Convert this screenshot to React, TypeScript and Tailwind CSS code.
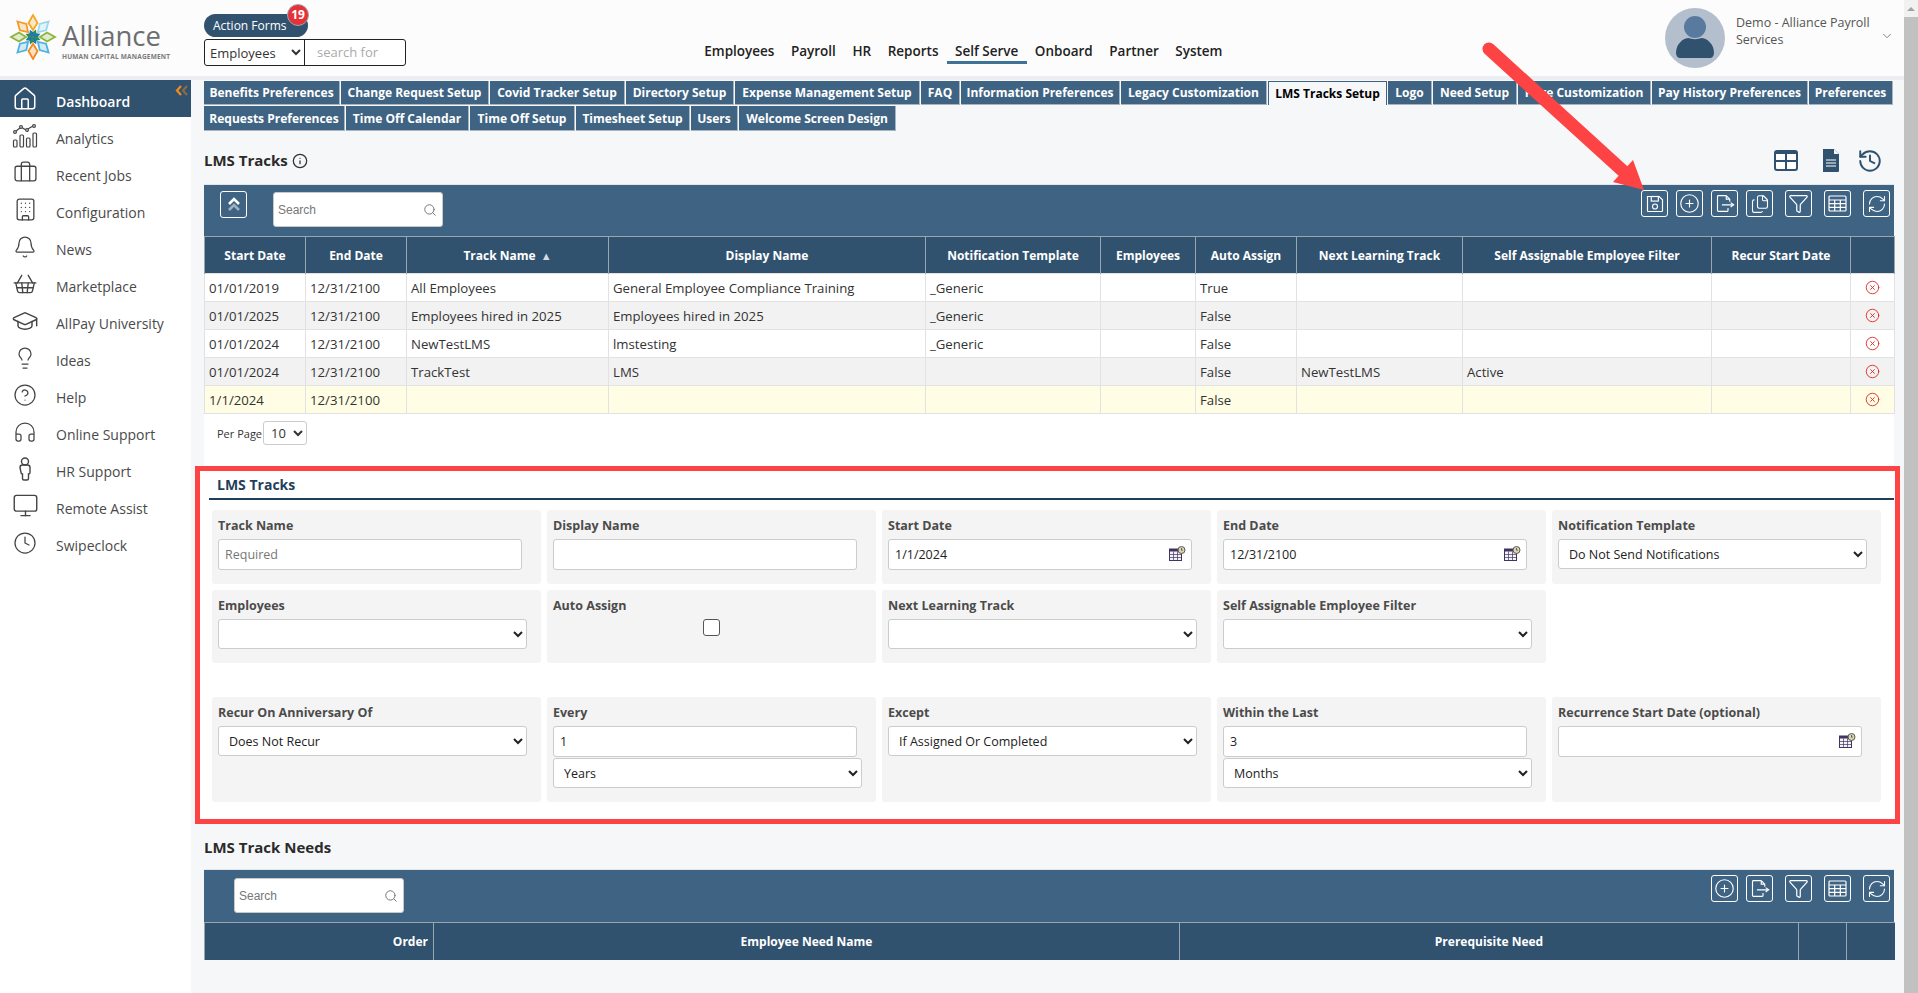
import React from 'react';
import {
  House, Briefcase, Building, Bell, ShoppingBasket, GraduationCap, Lightbulb, CircleHelp,
  Headphones, Monitor, Clock, CirclePlus, Files, Funnel, RefreshCw, History,
  ChevronDown, Search, CircleX, Info,
} from 'lucide-react';

const AnalyticsIcon = () => (
  <svg width="26" height="24" viewBox="0 0 26 24" fill="none" stroke="#444" strokeWidth="1.2">
    <path d="M3 8l6-5 5 3 7-4" />
    <circle cx="3" cy="8" r="1.4" fill="#fff" /><circle cx="9" cy="3" r="1.4" fill="#fff" />
    <circle cx="15" cy="6" r="1.4" fill="#fff" /><circle cx="22" cy="2" r="1.4" fill="#fff" />
    <rect x="1.5" y="16" width="3.5" height="7" rx="1" /><rect x="8" y="11" width="3.5" height="12" rx="1" />
    <rect x="14.5" y="14" width="3.5" height="9" rx="1" /><rect x="21" y="9" width="3.5" height="14" rx="1" />
  </svg>
);

const PersonIcon = () => (
  <svg width="16" height="24" viewBox="0 0 16 24" fill="none" stroke="#444" strokeWidth="1.4">
    <circle cx="8" cy="4.5" r="3.5" />
    <path d="M3 10.5c0-1.5 1-2.5 2.5-2.5h5c1.500 0 2.500 1 2.500 2.500v5c0 1-.8 1.500-1.500 1.500v4.500c0 1-.8 1.500-1.500 1.500h-3c-.8 0-1.500-.5-1.500-1.500V17c-.8 0-1.500-.5-1.500-1.500z" />
  </svg>
);

const sideItems: { label: string; icon: React.ReactNode }[] = [
  { label: 'Analytics', icon: <AnalyticsIcon /> },
  { label: 'Recent Jobs', icon: <Briefcase size={25} strokeWidth={1.25} color="#444" /> },
  { label: 'Configuration', icon: <Building size={25} strokeWidth={1.25} color="#444" /> },
  { label: 'News', icon: <Bell size={24} strokeWidth={1.25} color="#444" /> },
  { label: 'Marketplace', icon: <ShoppingBasket size={26} strokeWidth={1.25} color="#444" /> },
  { label: 'AllPay University', icon: <GraduationCap size={28} strokeWidth={1.25} color="#444" /> },
  { label: 'Ideas', icon: <Lightbulb size={24} strokeWidth={1.25} color="#444" /> },
  { label: 'Help', icon: <CircleHelp size={24} strokeWidth={1.25} color="#444" /> },
  { label: 'Online Support', icon: <Headphones size={24} strokeWidth={1.25} color="#444" /> },
  { label: 'HR Support', icon: <PersonIcon /> },
  { label: 'Remote Assist', icon: <Monitor size={27} strokeWidth={1.25} color="#444" /> },
  { label: 'Swipeclock', icon: <Clock size={24} strokeWidth={1.25} color="#444" /> },
];

const tabsTop = [
  { label: 'Benefits Preferences', w: 'w-[136px]' },
  { label: 'Change Request Setup', w: 'w-[148px]' },
  { label: 'Covid Tracker Setup', w: 'w-[135px]' },
  { label: 'Directory Setup', w: 'w-[108px]' },
  { label: 'Expense Management Setup', w: 'w-[185px]' },
  { label: 'FAQ', w: 'w-[39px]' },
  { label: 'Information Preferences', w: 'w-[159px]' },
  { label: 'Legacy Customization', w: 'w-[146px]' },
  { label: 'LMS Tracks Setup', w: 'w-[119px]', active: true },
  { label: 'Logo', w: 'w-[44px]' },
  { label: 'Need Setup', w: 'w-[84px]' },
  { label: 'Page Customization', w: 'w-[133px]' },
  { label: 'Pay History Preferences', w: 'w-[156px]' },
  { label: 'Preferences', w: 'w-[84px]' },
];

const tabsBottom = [
  { label: 'Requests Preferences', w: 'w-[141px]' },
  { label: 'Time Off Calendar', w: 'w-[123px]' },
  { label: 'Time Off Setup', w: 'w-[105px]' },
  { label: 'Timesheet Setup', w: 'w-[114px]' },
  { label: 'Users', w: 'w-[47px]' },
  { label: 'Welcome Screen Design', w: 'w-[157px]' },
];

const trackCols = [
  { label: 'Start Date', w: 'w-[101px]' },
  { label: 'End Date', w: 'w-[101px]' },
  { label: 'Track Name', w: 'w-[202px]', sort: true },
  { label: 'Display Name', w: 'w-[317px]' },
  { label: 'Notification Template', w: 'w-[175px]' },
  { label: 'Employees', w: 'w-[95px]' },
  { label: 'Auto Assign', w: 'w-[101px]' },
  { label: 'Next Learning Track', w: 'w-[166px]' },
  { label: 'Self Assignable Employee Filter', w: 'w-[249px]' },
  { label: 'Recur Start Date', w: 'w-[139px]' },
  { label: '', w: 'w-[44px]' },
];

const trackRows = [
  ['01/01/2019', '12/31/2100', 'All Employees', 'General Employee Compliance Training', '_Generic', '', 'True', '', '', ''],
  ['01/01/2025', '12/31/2100', 'Employees hired in 2025', 'Employees hired in 2025', '_Generic', '', 'False', '', '', ''],
  ['01/01/2024', '12/31/2100', 'NewTestLMS', 'lmstesting', '_Generic', '', 'False', '', '', ''],
  ['01/01/2024', '12/31/2100', 'TrackTest', 'LMS', '', '', 'False', 'NewTestLMS', 'Active', ''],
  ['1/1/2024', '12/31/2100', '', '', '', '', 'False', '', '', ''],
];

const rowBg = ['bg-white', 'bg-[#f2f2f2]', 'bg-white', 'bg-[#f2f2f2]', 'bg-[#fffde3]'];

const IconBtn: React.FC<{ children: React.ReactNode; className?: string }> = ({ children, className }) => (
  <button className={`w-[27px] h-[27px] flex items-center justify-center border border-white rounded-[3px] text-white ${className || ''}`}>
    {children}
  </button>
);

const SaveIcon = () => (
  <svg width="20" height="20" viewBox="0 0 24 24" fill="none" stroke="#fff" strokeWidth="1.4">
    <path d="M3 3h14l4 4v13a1 1 0 0 1-1 1H4a1 1 0 0 1-1-1z" />
    <rect x="7.500" y="3" width="8.500" height="5.500" />
    <circle cx="12" cy="15" r="3" />
  </svg>
);

const ExportIcon = () => (
  <svg width="21" height="21" viewBox="0 0 24 24" fill="none" stroke="#fff" strokeWidth="1.3">
    <path d="M14 3H5a1 1 0 0 0-1 1v16a1 1 0 0 0 1 1h10a1 1 0 0 0 1-1v-3M14 3l4 4v3M14 3v4h4" />
    <path d="M9 13.500h12M19 11l3.500 2.500-3.500 2.500" />
  </svg>
);

const GridIcon = () => (
  <svg width="19" height="17" viewBox="0 0 19 17" fill="none" stroke="#fff" strokeWidth="1.2">
    <rect x="1" y="1" width="17" height="15" rx="1" />
    <path d="M1 5h17M1 8.700h17M1 12.300h17M6.700 5v11M12.300 5v11" />
  </svg>
);

const SearchBox: React.FC<{ className?: string }> = ({ className }) => (
  <div className={`w-[170px] h-[35px] bg-white rounded-[3px] border border-[#c8c8c8] flex items-center pl-[4px] pr-[5px] ${className || ''}`}>
    <input placeholder="Search" className="min-w-0 flex-1 text-[12px] outline-none placeholder:text-[#777] font-['Liberation_Sans',sans-serif]" />
    <Search size={14} strokeWidth={1.7} color="#777" />
  </div>
);

const CalendarIcon = () => (
  <svg width="17" height="15" viewBox="0 0 17 15" className="shrink-0 -mt-[3px]">
    <rect x="0.500" y="3" width="12" height="11.500" fill="#f4f2f7" stroke="#3f3560" />
    <rect x="0.500" y="3" width="12" height="2.500" fill="#3f3560" />
    <path d="M4.500 5.500v9M8.500 5.500v9M0.500 8.500h12M0.500 11.500h12" stroke="#3f3560" strokeWidth="0.7" />
    <circle cx="12.500" cy="4" r="3.500" fill="#d9d3b8" stroke="#5b5b4a" />
    <path d="M12.500 2v2.200h1.300" stroke="#333" strokeWidth="0.7" fill="none" />
  </svg>
);

const Field: React.FC<{ label: string; children?: React.ReactNode; h?: string }> = ({ label, children, h }) => (
  <div className={`${h || ''} bg-[#f4f4f4] rounded-[3px] pl-[6px] pt-[7px]`}>
    <div className="text-[12.500px] font-bold text-[#4b4b4b] leading-[17px] mb-[5px]">{label}</div>
    {children}
  </div>
);

const TextBox: React.FC<{ value?: string; placeholder?: string; date?: boolean }> = ({ value, placeholder, date }) => (
  <div className="w-[304px] h-[31px] bg-white border border-[#ccc] rounded-[3px] flex items-center pl-[6px] pr-[5px]">
    <input defaultValue={value} placeholder={placeholder} className="min-w-0 flex-1 pt-[1px] text-[12.500px] text-[#222] outline-none placeholder:text-[#777]" />
    {date && <CalendarIcon />}
  </div>
);

const Dropdown: React.FC<{ value?: string; className?: string }> = ({ value, className }) => (
  <select defaultValue={value} className={`block w-[309px] h-[30px] bg-white border border-[#ccc] rounded-[3px] pl-[6px] text-[12.500px] text-[#222] ${className || ''}`}>
    <option>{value}</option>
  </select>
);

const Logo = () => {
  const colors = ['#f5a623', '#9ad7ea', '#8db43c', '#4fb3e0', '#f28a1e', '#4fb3e0', '#8db43c', '#f39a2a'];
  const inner = ['#2f8f4e', '#1f75b5'];
  return (
    <svg width="48" height="46" viewBox="-24 -23 48 46" className="shrink-0">
      {colors.map((c, i) => (
        <path key={i} d="M0-7L4.500-14L0-22L-4.500-14Z" fill={c} fillOpacity="0.25" stroke={c} strokeWidth="1.800" transform={`rotate(${i * 45})`} />
      ))}
      {colors.map((_, i) => (
        <path key={i} d="M0 0L2.500-3.500L0-8L-2.500-3.500Z" fill={inner[i % 2]} transform={`rotate(${i * 45 + 22})`} />
      ))}
    </svg>
  );
};

const App: React.FC = () => {
  return (
    <div className="relative flex w-full h-screen overflow-hidden bg-[#f6f7f9] font-['Open_Sans',sans-serif] text-[#333]">
      <div className="w-[1904px] shrink-0 flex flex-col">
        {/* header */}
        <div className="h-[76px] bg-[#fcfcfc] flex items-start shrink-0">
          <div className="w-[204px] pl-[9px] pt-[14px] flex">
            <Logo />
            <div className="ml-[5px]">
              <div className="text-[27.500px] leading-[32px] text-[#6d6e71] mt-[6px]">Alliance</div>
              <div className="text-[6.500px] font-bold leading-[10px] text-[#7b7b7b] tracking-[0.2px] whitespace-nowrap">HUMAN CAPITAL MANAGEMENT</div>
            </div>
          </div>
          <div className="pt-[14px] w-[202px]">
            <div className="relative w-[104px] h-[23px] rounded-full bg-[#31526f] text-white text-[12px] flex items-center pl-[9px]">
              Action Forms
              <span className="absolute -top-[10px] -right-[1px] w-[22px] h-[22px] rounded-full bg-[#e53238] border border-[#9aa5ae] text-white text-[12px] font-bold flex items-center justify-center">19</span>
            </div>
            <div className="mt-[2px] flex h-[27px] border border-[#222] rounded-[3px] bg-white">
              <select defaultValue="Employees" className="w-[100px] border-r border-[#222] text-[13px] pl-[1px] text-[#333]">
                <option>Employees</option>
              </select>
              <input placeholder="search for" className="min-w-0 flex-1 pl-[12px] text-[13px] outline-none placeholder:text-[#aaa]" />
            </div>
          </div>
          <div className="ml-[290px] mt-[41px] flex text-[13.500px] font-semibold text-[#222]">
            {['Employees', 'Payroll', 'HR', 'Reports', 'Self Serve', 'Onboard', 'Partner', 'System'].map(n => (
              <div key={n} className={`px-[8.250px] h-[23px] leading-[20px] border-b-[3px] ${n === 'Self Serve' ? 'border-[#3f7396]' : 'border-transparent'}`}>{n}</div>
            ))}
          </div>
          <div className="ml-auto pr-[10px] pt-[8px] flex">
            <svg width="60" height="60" viewBox="0 0 60 60" className="shrink-0">
              <circle cx="30" cy="30" r="30" fill="#b4bfcd" />
              <circle cx="30" cy="19" r="11" fill="#587a9f" />
              <path d="M11 45c0-9 7-15 13-15 2 1.500 10 1.500 12 0 6 0 13 6 13 15 0 3-2 5-4 5H15c-2 0-4-2-4-5z" fill="#31526f" />
            </svg>
            <div className="ml-[11px] w-[144px] text-[12.500px] leading-[17px] text-[#555] pt-[6px]">Demo - Alliance Payroll Services</div>
            <ChevronDown size={14} strokeWidth={1.2} color="#555" className="mt-[21px]" />
          </div>
        </div>
        <div className="h-[4px] bg-[#eceef1] shrink-0" />

        <div className="flex flex-1 min-h-0">
          {/* sidebar */}
          <div className="w-[191px] bg-white shrink-0">
            <div className="relative h-[37px] bg-[#31526f] flex items-center text-white font-semibold text-[14px]">
              <div className="w-[56px] flex justify-center pr-[6px]"><House size={26} strokeWidth={1.4} color="#fff" /></div>
              <span className="pt-[6px]">Dashboard</span>
              <svg width="13" height="11" viewBox="0 0 13 11" fill="none" strokeWidth="2.200" className="absolute top-[5px] right-[3px]">
                <path d="M6 1L2 5.500L6 10" stroke="#f08a1c" />
                <path d="M12 1L8 5.500L12 10" stroke="#8a6a4a" />
              </svg>
            </div>
            {sideItems.map(item => (
              <div key={item.label} className="h-[37px] flex items-center text-[14px] text-[#4a4a4a]">
                <div className="w-[56px] flex justify-center pr-[6px]">{item.icon}</div>
                <span className="pt-[6px]">{item.label}</span>
              </div>
            ))}
          </div>

          {/* main */}
          <div className="flex-1 min-w-0 pl-[13px] pr-[10px] pt-[1px]">
            <div className="flex gap-[1px] text-[12px] font-bold text-white whitespace-nowrap">
              {tabsTop.map(t => (
                <div key={t.label} className={`${t.w} h-[24px] pt-[1px] flex items-center justify-center shrink-0 ${t.active ? 'bg-[#f6f7f9] text-black border-t border-x border-[#3f6483]' : 'bg-[#3f6483] border-b border-r border-[#a9b4bf]'}`}>{t.label}</div>
              ))}
            </div>
            <div className="mt-[1px] flex gap-[1px] text-[12px] font-bold text-white whitespace-nowrap">
              {tabsBottom.map(t => (
                <div key={t.label} className={`${t.w} h-[25px] pt-[1px] flex items-center justify-center shrink-0 bg-[#3f6483] border-b border-r border-[#a9b4bf]`}>{t.label}</div>
              ))}
            </div>

            <div className="mt-[18px] h-[23px] flex items-center">
              <span className="text-[15px] font-bold text-[#2b2b2b]">LMS Tracks</span>
              <Info size={16} strokeWidth={1.900} color="#333" className="ml-[4px]" />
              <div className="ml-auto flex items-center">
                <svg width="24" height="21" viewBox="0 0 24 21" fill="none">
                  <rect x="1" y="1" width="22" height="19" rx="2" fill="#fff" stroke="#31526f" strokeWidth="2" />
                  <rect x="1" y="1" width="22" height="3" fill="#31526f" />
                  <path d="M12 2v17M2 11h20" stroke="#31526f" strokeWidth="2" />
                </svg>
                <svg width="18" height="23" viewBox="0 0 18 23" className="ml-[24px]">
                  <path d="M1 0h11l5 5v17a1 1 0 0 1-1 1H1z" fill="#31526f" />
                  <path d="M12 0v5h5z" fill="#f6f7f9" />
                  <path d="M4 11h10M4 14h10M4 17h10" stroke="#fff" strokeWidth="1" />
                </svg>
                <History size={26} strokeWidth={1.800} color="#31526f" className="ml-[17px] mr-[11px]" />
              </div>
            </div>

            {/* tracks grid */}
            <div className="mt-[12px] h-[52px] bg-[#3f6483] flex items-start pt-[5px] pl-[16px] pr-[4px] border-t border-[#e2e6ea]">
              <IconBtn className="mt-[1px]">
                <svg width="14" height="16" viewBox="0 0 14 16" fill="none" strokeWidth="2.600">
                  <path d="M2 7l5-5 5 5" stroke="#fff" />
                  <path d="M2 13l5-5 5 5" stroke="#9fb1c1" />
                </svg>
              </IconBtn>
              <SearchBox className="ml-[26px] mt-[2px]" />
              <div className="ml-auto flex">
                <IconBtn className="mr-[8px]"><SaveIcon /></IconBtn>
                <IconBtn className="mr-[8px]"><CirclePlus size={21} strokeWidth={1.300} /></IconBtn>
                <IconBtn className="mr-[8px]"><ExportIcon /></IconBtn>
                <IconBtn className="mr-[12px]"><Files size={20} strokeWidth={1.300} /></IconBtn>
                <IconBtn className="mr-[12px]"><Funnel size={21} strokeWidth={1.400} /></IconBtn>
                <IconBtn className="mr-[12px]"><GridIcon /></IconBtn>
                <IconBtn><RefreshCw size={20} strokeWidth={1.300} /></IconBtn>
              </div>
            </div>
            <table className="table-fixed w-[1690px] border-collapse">
              <thead>
                <tr className="h-[37px] bg-[#31526f] text-white text-[12px] font-bold">
                  {trackCols.map((c, i) => (
                    <th key={i} className={`${c.w} pt-[2px] border border-[#9aa5ae] border-b-0 font-bold`}>
                      {c.label}{c.sort && <span className="ml-[5px] text-[11px] text-[#d5dbe1]">▲</span>}
                    </th>
                  ))}
                </tr>
              </thead>
              <tbody>
                {trackRows.map((r, i) => (
                  <tr key={i} className={`h-[28px] ${rowBg[i]} text-[13.200px] text-[#333]`}>
                    {r.map((c, j) => (
                      <td key={j} className="border border-[#e2e2e2] pl-[4px] pt-[2px] whitespace-nowrap overflow-hidden">{c}</td>
                    ))}
                    <td className="border border-[#e2e2e2]">
                      <div className="flex justify-center"><CircleX size={15} strokeWidth={1.500} color="#e0302a" /></div>
                    </td>
                  </tr>
                ))}
              </tbody>
            </table>
            <div className="h-[52px] bg-white flex items-start pl-[13px] pt-[7px]">
              <span className="text-[11px] mt-[5px] w-[46px] whitespace-nowrap">Per Page</span>
              <select defaultValue="10" className="w-[44px] h-[24px] border border-[#ccc] rounded-[3px] text-[13px] pl-[3px]">
                <option>10</option>
              </select>
            </div>

            {/* red annotation box */}
            <div className="h-[358px] -ml-[9px] -mr-[6px] border-[5px] border-[#fd4343] bg-white">
              <div className="ml-[9px] mr-[1px] h-[29px] border-b-2 border-[#1e3e5a] pl-[8px] flex items-center">
                <span className="text-[14px] font-bold text-[#1f3f5c]">LMS Tracks</span>
              </div>
              <div className="ml-[12px] mt-[10px] grid grid-cols-[repeat(5,329px)] gap-[6px]">
                <Field label="Track Name" h="h-[74px]"><TextBox placeholder="Required" /></Field>
                <Field label="Display Name"><TextBox /></Field>
                <Field label="Start Date"><TextBox value="1/1/2024" date /></Field>
                <Field label="End Date"><TextBox value="12/31/2100" date /></Field>
                <Field label="Notification Template"><Dropdown value="Do Not Send Notifications" /></Field>
                <Field label="Employees" h="h-[73px]"><Dropdown /></Field>
                <Field label="Auto Assign">
                  <div className="flex justify-center pr-[6px]">
                    <input type="checkbox" className="appearance-none w-[17px] h-[17px] bg-white border border-[#555] rounded-[3px]" />
                  </div>
                </Field>
                <Field label="Next Learning Track"><Dropdown /></Field>
                <Field label="Self Assignable Employee Filter"><Dropdown /></Field>
              </div>
              <div className="ml-[12px] mt-[34px] grid grid-cols-[repeat(5,329px)] gap-[6px]">
                <Field label="Recur On Anniversary Of" h="h-[105px]"><Dropdown value="Does Not Recur" /></Field>
                <Field label="Every"><TextBox value="1" /><Dropdown value="Years" className="mt-[1px]" /></Field>
                <Field label="Except"><Dropdown value="If Assigned Or Completed" /></Field>
                <Field label="Within the Last"><TextBox value="3" /><Dropdown value="Months" className="mt-[1px]" /></Field>
                <Field label="Recurrence Start Date (optional)"><TextBox date /></Field>
              </div>
            </div>

            {/* needs grid */}
            <div className="mt-[12px] h-[23px] flex items-center text-[15px] font-bold text-[#2b2b2b]">LMS Track Needs</div>
            <div className="mt-[10px] h-[53px] bg-[#3f6483] flex items-start pt-[5px] pl-[30px] pr-[4px] border-t border-[#e2e6ea]">
              <SearchBox className="mt-[3px]" />
              <div className="ml-auto flex">
                <IconBtn className="mr-[8px]"><CirclePlus size={21} strokeWidth={1.300} /></IconBtn>
                <IconBtn className="mr-[12px]"><ExportIcon /></IconBtn>
                <IconBtn className="mr-[12px]"><Funnel size={21} strokeWidth={1.400} /></IconBtn>
                <IconBtn className="mr-[12px]"><GridIcon /></IconBtn>
                <IconBtn><RefreshCw size={20} strokeWidth={1.300} /></IconBtn>
              </div>
            </div>
            <table className="table-fixed w-[1690px] border-collapse">
              <thead>
                <tr className="h-[37px] bg-[#31526f] text-white text-[12px] font-bold">
                  <th className="w-[229px] pt-[2px] border-x border-t border-[#9aa5ae] text-right pr-[5px] font-bold">Order</th>
                  <th className="w-[746px] pt-[2px] border-x border-t border-[#9aa5ae] font-bold">Employee Need Name</th>
                  <th className="w-[619px] pt-[2px] border-x border-t border-[#9aa5ae] font-bold">Prerequisite Need</th>
                  <th className="w-[48px] border-x border-t border-[#9aa5ae]" />
                  <th className="w-[48px] border-t border-[#9aa5ae]" />
                </tr>
              </thead>
            </table>
          </div>
        </div>
      </div>

      {/* scrollbar */}
      <div className="w-[14px] shrink-0 bg-[#f1f1f1] flex flex-col">
        <div className="h-[17px] flex items-center justify-center">
          <div className="w-0 h-0 border-x-[4px] border-x-transparent border-b-[4px] border-b-[#a3a3a3]" />
        </div>
        <div className="flex-1 bg-[#c1c1c1]" />
      </div>

      {/* red annotation arrow */}
      <svg className="absolute inset-0 pointer-events-none" width="1918" height="993" viewBox="0 0 1918 993">
        <line x1="1489" y1="49" x2="1623" y2="171" stroke="#fd4343" strokeWidth="13" strokeLinecap="round" />
        <polygon points="1644,190 1633,160 1613,182" fill="#fd4343" />
      </svg>
    </div>
  );
};

export default App;
